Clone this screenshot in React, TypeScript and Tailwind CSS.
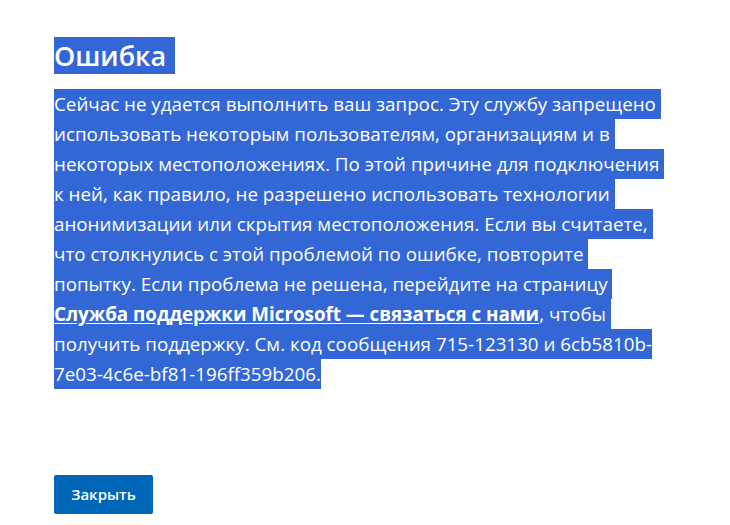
const lines: React.ReactNode[] = [
  'Сейчас не удается выполнить ваш запрос. Эту службу запрещено\u00a0',
  'использовать некоторым пользователям, организациям и в\u00a0',
  'некоторых местоположениях. По этой причине для подключения\u00a0',
  'к ней, как правило, не разрешено использовать технологии\u00a0',
  'анонимизации или скрытия местоположения. Если вы считаете,\u00a0',
  'что столкнулись с этой проблемой по ошибке, повторите\u00a0',
  'попытку. Если проблема не решена, перейдите на страницу\u00a0',
  <>
    <a href="#" className="font-bold underline underline-offset-2">
      Служба поддержки Microsoft — связаться с нами
    </a>
    , чтобы{'\u00a0'}
  </>,
  'получить поддержку. См. код сообщения 715-123130 и 6cb5810b-',
  '7e03-4c6e-bf81-196ff359b206.',
];

export default function App() {
  return (
    <div className="min-h-screen bg-white px-[54px] pt-[37px] font-['Open_Sans',sans-serif] text-white">
      <h1 className="w-fit bg-[#3367d6] pr-[9px] text-[27px] font-semibold leading-[37px]">Ошибка</h1>
      <div className="mt-[15px] text-[18.8px] leading-[30px]">
        {lines.map((line, i) => (
          <div key={i} className="w-fit whitespace-nowrap bg-[#3367d6]">
            {line}
          </div>
        ))}
      </div>
      <button
        type="button"
        className="mt-[86px] h-[39px] w-[99px] rounded-[2px] bg-[#0067b8] text-[15px] font-semibold text-white"
      >
        Закрыть
      </button>
    </div>
  );
}
